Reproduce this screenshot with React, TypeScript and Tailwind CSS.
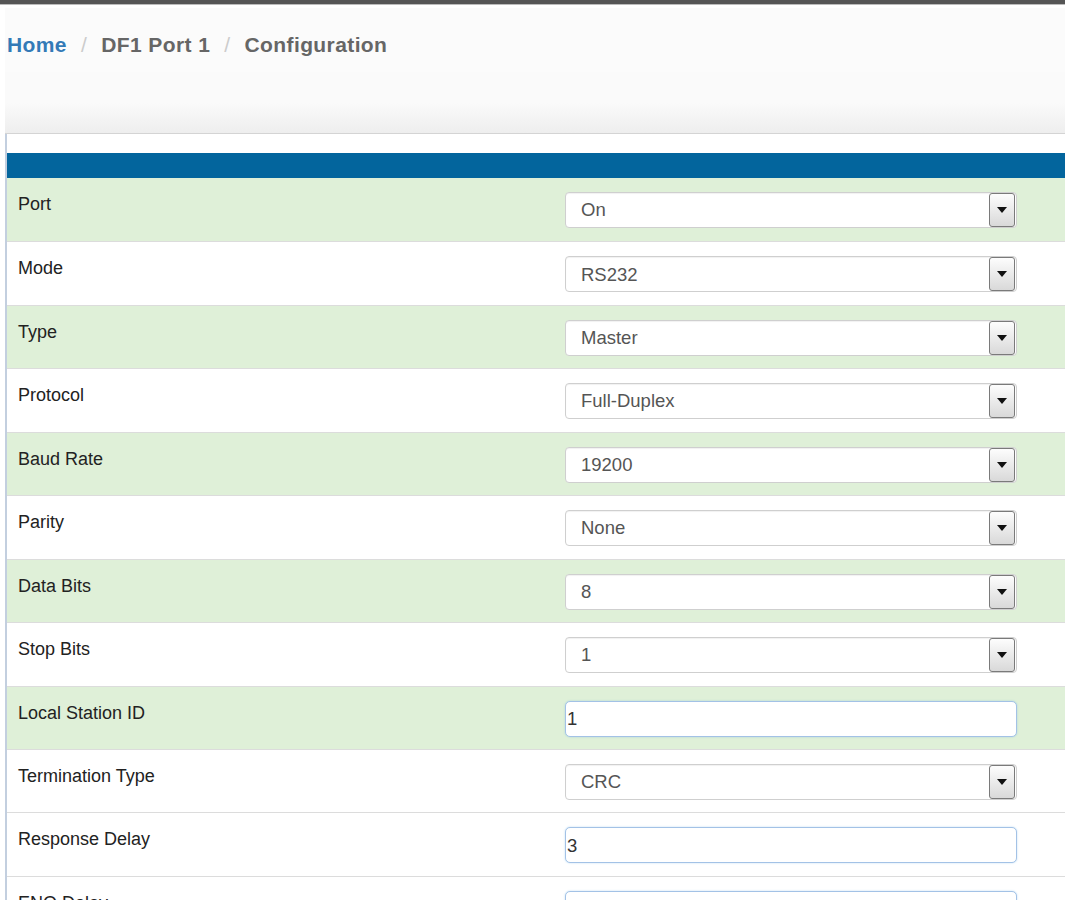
import React from "react"

type Field = {
  label: string
  value: string
  kind: "select" | "input"
  shaded: boolean
}

const fields: Field[] = [
  { label: "Port", value: "On", kind: "select", shaded: true },
  { label: "Mode", value: "RS232", kind: "select", shaded: false },
  { label: "Type", value: "Master", kind: "select", shaded: true },
  { label: "Protocol", value: "Full-Duplex", kind: "select", shaded: false },
  { label: "Baud Rate", value: "19200", kind: "select", shaded: true },
  { label: "Parity", value: "None", kind: "select", shaded: false },
  { label: "Data Bits", value: "8", kind: "select", shaded: true },
  { label: "Stop Bits", value: "1", kind: "select", shaded: false },
  { label: "Local Station ID", value: "1", kind: "input", shaded: true },
  { label: "Termination Type", value: "CRC", kind: "select", shaded: false },
  { label: "Response Delay", value: "3", kind: "input", shaded: false },
  { label: "ENQ Delay", value: "", kind: "input", shaded: false },
]

function FakeSelect({ value }: { value: string }) {
  return (
    <div className="flex h-[36px] w-[452px] items-center rounded-[4px] border border-[#cfcfcf] bg-white pl-[15px] pr-[1px] shadow-[inset_0_1px_1px_rgba(0,0,0,0.06)]">
      <span className="flex-1 text-[18.5px] text-[#555]">{value}</span>
      <div className="flex h-[34px] w-[26px] items-center justify-center rounded-[3px] border border-[#7a7a7a] bg-gradient-to-b from-[#fdfdfd] to-[#d9d9d9]">
        <svg width="10" height="6" viewBox="0 0 10 6">
          <path d="M0 0 L10 0 L5 6 Z" fill="#111" />
        </svg>
      </div>
    </div>
  )
}

function FakeInput({ value }: { value: string }) {
  return (
    <div className="flex h-[36px] w-[452px] items-center rounded-[5px] border border-[#a3c2e6] bg-white pl-[1px] shadow-[0_0_2px_rgba(102,175,233,0.45)]">
      <span className="text-[18.5px] text-[#333]">{value}</span>
    </div>
  )
}

export default function App() {
  return (
    <div className="min-h-[900px] bg-white font-['Liberation_Sans',Arial,sans-serif]">
      <div className="h-[4px] bg-[#555]" />
      <div className="h-[1px] bg-[#bbb]" />

      {/* breadcrumb */}
      <div className="ml-[5px] mt-[3px] h-[64px] bg-[#fbfbfb] pl-[2px] pt-[24px]">
        <nav className="flex items-center text-[21px] leading-[26px] font-bold tracking-[0.4px]">
          <span className="text-[#337ab7]">Home</span>
          <span className="px-[14px] font-normal text-[#ccc]">/</span>
          <span className="text-[#666]">DF1 Port 1</span>
          <span className="px-[14px] font-normal text-[#ccc]">/</span>
          <span className="text-[#666]">Configuration</span>
        </nav>
      </div>

      <div className="ml-[5px] h-[62px] border-b border-[#d4d4d4] bg-[linear-gradient(to_bottom,#fafafa_0%,#fafafa_50%,#eeeeee_100%)]" />

      <div className="ml-[5px] border-l-2 border-[#c3cfdf]">
        <div className="h-[19px] bg-white" />
        <div className="h-[25px] bg-[#03659d]" />
        {fields.map((f, i) => (
          <div
            key={f.label}
            className={`flex h-[63.45px] items-start ${i > 0 ? "border-t border-[#dcdcdc]" : ""} ${
              f.shaded ? "bg-[#dff0d8]" : "bg-white"
            }`}
          >
            <div className="w-[558px] pl-[11px] pt-[15px] text-[18px] leading-[22px] text-[#222]">
              {f.label}
            </div>
            <div className="pt-[14px]">
              {f.kind === "select" ? <FakeSelect value={f.value} /> : <FakeInput value={f.value} />}
            </div>
          </div>
        ))}
      </div>
    </div>
  )
}
